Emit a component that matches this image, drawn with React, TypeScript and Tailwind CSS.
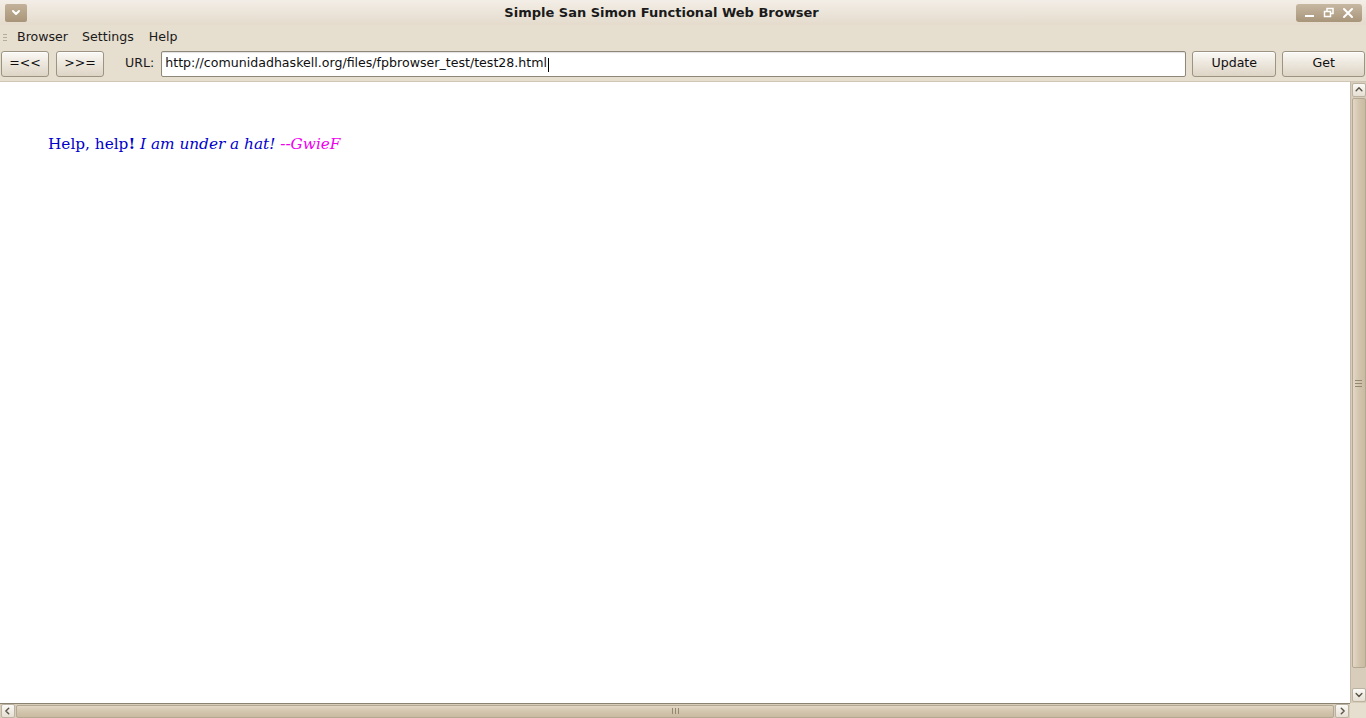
import React from "react";

const ui = { fontFamily: '"DejaVu Sans", "Liberation Sans", sans-serif' };

function GtkButton(props: { label: string; className: string }) {
  return (
    <button
      className={`flex h-[26px] items-center justify-center rounded-[3px] border border-[#9d9382] bg-gradient-to-b from-[#fbf9f6] via-[#ece6dc] to-[#ddd4c5] text-[12.6px] text-[#101010] shadow-[inset_0_1px_0_#ffffff] ${props.className}`}
    >
      {props.label}
    </button>
  );
}

function ArrowButton(props: { dir: "up" | "down" | "left" | "right"; className?: string }) {
  const paths = {
    up: "M3 8 L7 4 L11 8",
    down: "M3 5 L7 9 L11 5",
    left: "M8 3 L4 7 L8 11",
    right: "M6 3 L10 7 L6 11",
  };
  return (
    <div
      className={`flex h-[14px] w-[14px] shrink-0 items-center justify-center rounded-[2px] border border-[#bcb2a1] bg-gradient-to-b from-[#fbfaf7] to-[#e6dfd3] ${props.className ?? ""}`}
    >
      <svg width="10" height="10" viewBox="0 0 14 14">
        <path d={paths[props.dir]} fill="none" stroke="#5a5347" strokeWidth="2" strokeLinecap="round" strokeLinejoin="round" />
      </svg>
    </div>
  );
}

export default function App() {
  return (
    <div className="flex h-[718px] w-[1366px] flex-col overflow-hidden bg-[#e6dece]" style={ui}>
      {/* title bar */}
      <div className="relative flex h-[25px] items-center bg-gradient-to-b from-[#f3eee7] to-[#e4dbcc]">
        <div className="ml-[5px] flex h-[18px] w-[22px] items-center justify-center rounded-[2px] bg-gradient-to-b from-[#c3b29a] to-[#a89579]">
          <svg width="10" height="8" viewBox="0 0 10 8">
            <path d="M2 2 L5 5 L8 2" fill="none" stroke="#ffffff" strokeWidth="2" strokeLinecap="round" strokeLinejoin="round" />
          </svg>
        </div>
        <div className="flex-1 text-center text-[13px] font-bold text-[#1a1a1a]">
          Simple San Simon Functional Web Browser
        </div>
        <div className="mr-[4px] flex h-[18px] w-[66px] items-center justify-around rounded-[3px] bg-gradient-to-b from-[#c7b8a2] to-[#a8957a] px-[4px]">
          <svg width="12" height="12" viewBox="0 0 12 12">
            <rect x="1" y="8" width="9" height="2" fill="#ffffff" />
          </svg>
          <svg width="12" height="12" viewBox="0 0 12 12">
            <rect x="4" y="1.5" width="6" height="5" fill="none" stroke="#ffffff" strokeWidth="1.5" />
            <rect x="1.5" y="4.5" width="6" height="5" fill="#b5a387" stroke="#ffffff" strokeWidth="1.5" />
          </svg>
          <svg width="12" height="12" viewBox="0 0 12 12">
            <path d="M2 2 L10 10 M10 2 L2 10" stroke="#ffffff" strokeWidth="2" strokeLinecap="round" />
          </svg>
        </div>
      </div>

      {/* menu bar */}
      <div className="flex h-[24px] items-center pt-px text-[12.6px] text-[#1a1a1a]">
        <div className="ml-[3px] mr-[4px] flex flex-col gap-[2px]">
          <span className="block h-px w-[4px] bg-[#b5ab9a]" />
          <span className="block h-px w-[4px] bg-[#b5ab9a]" />
          <span className="block h-px w-[4px] bg-[#b5ab9a]" />
        </div>
        <span className="ml-[3px] px-[3px]">Browser</span>
        <span className="ml-[8px] px-[3px]">Settings</span>
        <span className="ml-[9px] px-[3px]">Help</span>
      </div>

      {/* toolbar */}
      <div className="flex h-[32px] items-center pb-[3px]">
        <GtkButton label="=<<" className="ml-[1px] w-[48px]" />
        <GtkButton label=">>=" className="ml-[7px] w-[48px]" />
        <span className="ml-[21px] mr-[7px] text-[12.6px] text-[#1a1a1a]">URL:</span>
        <div className="flex h-[26px] w-[1025px] items-center rounded-[2px] border border-[#8f877a] bg-white pl-[3px] text-[12.6px] text-[#101010] shadow-[inset_0_1px_1px_rgba(0,0,0,0.12)]">
          http://comunidadhaskell.org/files/fpbrowser_test/test28.html
          <span className="ml-px mt-[3px] inline-block h-[14px] w-px bg-black" />
        </div>
        <GtkButton label="Update" className="ml-[6px] w-[84px]" />
        <GtkButton label="Get" className="ml-[6px] w-[83px]" />
      </div>

      {/* content + vertical scrollbar */}
      <div className="flex min-h-0 flex-1 border-t border-[#cfc6b6]">
        <div className="flex-1 bg-white pl-[48px] pt-[51px]">
          <p className="text-[15.3px] text-[#0000cc]" style={{ fontFamily: '"DejaVu Serif", "Liberation Serif", serif' }}>
            Help, help<b>!</b> <i>I am under a hat!</i> <i className="text-[#ee00ee]">--GwieF</i>
          </p>
        </div>
        <div className="flex w-[16px] flex-col items-center border-l border-[#c3b9a8] bg-[#d8cdbb] py-[1px]">
          <ArrowButton dir="up" />
          <div className="mb-[19px] mt-px flex w-[14px] flex-1 items-center justify-center rounded-[2px] border border-[#b3a891] bg-gradient-to-r from-[#e3d8c6] via-[#d3c5ae] to-[#c9baa1]">
            <div className="flex flex-col gap-[2px]">
              <span className="block h-px w-[7px] bg-[#958873]" />
              <span className="block h-px w-[7px] bg-[#958873]" />
              <span className="block h-px w-[7px] bg-[#958873]" />
            </div>
          </div>
          <ArrowButton dir="down" className="mt-px" />
        </div>
      </div>

      {/* horizontal scrollbar */}
      <div className="flex h-[15px] items-center">
        <div className="flex h-[15px] flex-1 items-center border-t border-[#8c8272] bg-[#d8cdbb] px-[1px]">
          <ArrowButton dir="left" />
          <div className="mx-px flex h-[13px] flex-1 items-center justify-center rounded-[2px] border border-[#b3a891] bg-gradient-to-b from-[#e3d8c6] via-[#d3c5ae] to-[#c9baa1]">
            <div className="flex gap-[2px]">
              <span className="block h-[6px] w-px bg-[#958873]" />
              <span className="block h-[6px] w-px bg-[#958873]" />
              <span className="block h-[6px] w-px bg-[#958873]" />
            </div>
          </div>
          <ArrowButton dir="right" />
        </div>
        <div className="h-[15px] w-[16px] bg-[#e6dece]" />
      </div>
    </div>
  );
}
